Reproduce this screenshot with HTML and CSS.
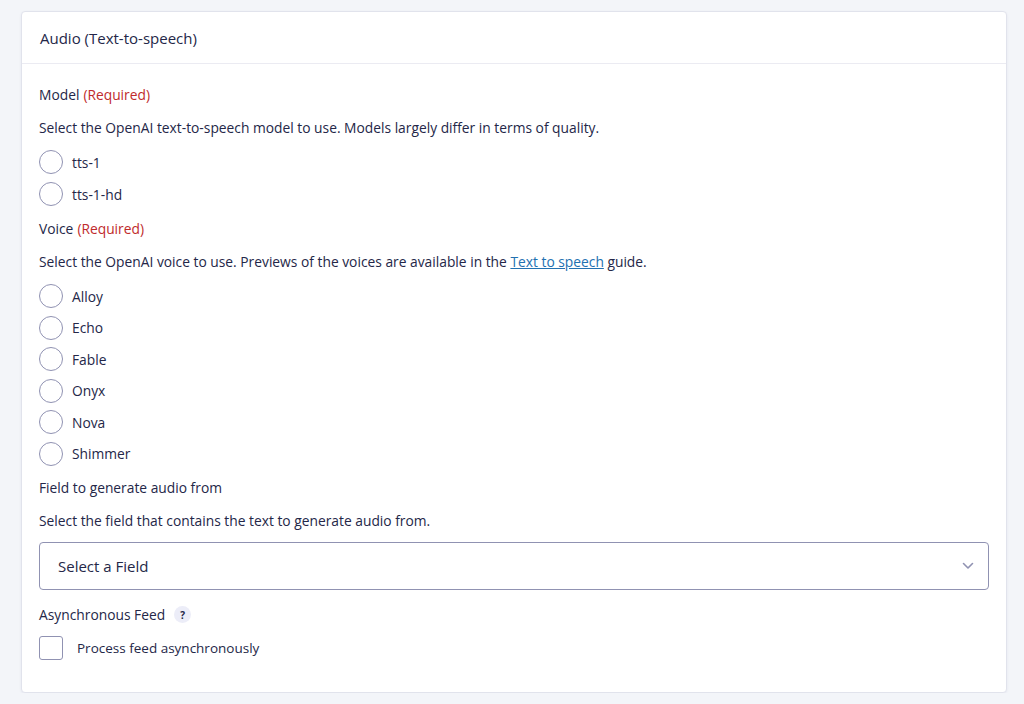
FILE: index.html
```html
<!DOCTYPE html>
<html lang="en">
<head>
<meta charset="utf-8">
<title>Audio (Text-to-speech)</title>
<link rel="stylesheet" href="styles.css">
</head>
<body>
<div class="card">
  <div class="card-header">Audio (Text-to-speech)</div>
  <div class="card-body">
    <div class="field">
      <div class="label">Model <span class="req">(Required)</span></div>
      <div class="desc">Select the OpenAI text-to-speech model to use. Models largely differ in terms of quality.</div>
      <div class="choices">
        <label class="choice"><span class="radio"></span>tts-1</label>
        <label class="choice"><span class="radio"></span>tts-1-hd</label>
      </div>
    </div>
    <div class="field">
      <div class="label">Voice <span class="req">(Required)</span></div>
      <div class="desc">Select the OpenAI voice to use. Previews of the voices are available in the <a href="#">Text to speech</a> guide.</div>
      <div class="choices voices">
        <label class="choice"><span class="radio"></span>Alloy</label>
        <label class="choice"><span class="radio"></span>Echo</label>
        <label class="choice"><span class="radio"></span>Fable</label>
        <label class="choice"><span class="radio"></span>Onyx</label>
        <label class="choice"><span class="radio"></span>Nova</label>
        <label class="choice"><span class="radio"></span>Shimmer</label>
      </div>
    </div>
    <div class="field">
      <div class="label">Field to generate audio from</div>
      <div class="desc">Select the field that contains the text to generate audio from.</div>
      <div class="select">
        <span>Select a Field</span>
        <svg class="chev" width="12" height="8" viewBox="0 0 12 8"><path d="M1.5 1.5 L6 6 L10.5 1.5" fill="none" stroke="#9092b2" stroke-width="1.6" stroke-linecap="round" stroke-linejoin="round"/></svg>
      </div>
    </div>
    <div class="field">
      <div class="label">Asynchronous Feed <span class="help">?</span></div>
      <label class="check"><span class="box"></span><span class="check-text">Process feed asynchronously</span></label>
    </div>
  </div>
</div>
</body>
</html>
```
FILE: styles.css
```css
* { box-sizing: border-box; }
body {
  margin: 0;
  background: #f3f5f9;
  font-family: "Open Sans", "Noto Sans", sans-serif;
  font-size: 13.8px;
  color: #242748;
  padding: 11px 17px 0 21px;
}
.card {
  background: #fff;
  border: 1px solid #e1e3ec;
  border-radius: 4px;
  box-shadow: 0 1px 3px rgba(18, 25, 97, 0.06);
  height: 682px;
}
.card-header {
  height: 52px;
  display: flex;
  align-items: center;
  padding: 0 0 0 18px;
  border-bottom: 1px solid #ebebf2;
  font-size: 15px;
  color: #242748;
}
.card-body {
  padding: 21px 17px 0 17px;
}
.field {
  display: flex;
  flex-direction: column;
}
.label {
  height: 20px;
  display: flex;
  align-items: center;
  line-height: 20px;
}
.req { color: #c02b2b; margin-left: 4px; }
.desc {
  margin-top: 13px;
  line-height: 20px;
}
.desc a { color: #2271b1; text-decoration: underline; }
.choices {
  margin-top: 12px;
  display: flex;
  flex-direction: column;
  gap: 8px;
  margin-bottom: 13px;
}
.voices { gap: 7.5px; margin-bottom: 12px; }
.choice {
  display: flex;
  align-items: center;
  height: 24px;
}
.radio {
  width: 24px;
  height: 24px;
  border: 1px solid #9092b2;
  border-radius: 50%;
  margin-right: 9px;
  flex: none;
  background: #fff;
}
.select {
  margin-top: 11px;
  height: 48px;
  border: 1px solid #9092b2;
  border-radius: 4px;
  display: flex;
  align-items: center;
  justify-content: space-between;
  padding: 0 14px 0 18px;
  font-size: 15px;
  margin-bottom: 15px;
}
.help {
  display: inline-flex;
  align-items: center;
  justify-content: center;
  width: 17px;
  height: 17px;
  border-radius: 50%;
  background: #ecedf8;
  color: #242748;
  font-size: 10px;
  font-weight: 700;
  margin-left: 9px;
}
.check {
  margin-top: 11px;
  display: flex;
  align-items: center;
  height: 24px;
}
.check-text { font-size: 13.5px; }
.box {
  width: 24px;
  height: 24px;
  border: 1px solid #9092b2;
  border-radius: 3px;
  margin-right: 14px;
  flex: none;
}
```
